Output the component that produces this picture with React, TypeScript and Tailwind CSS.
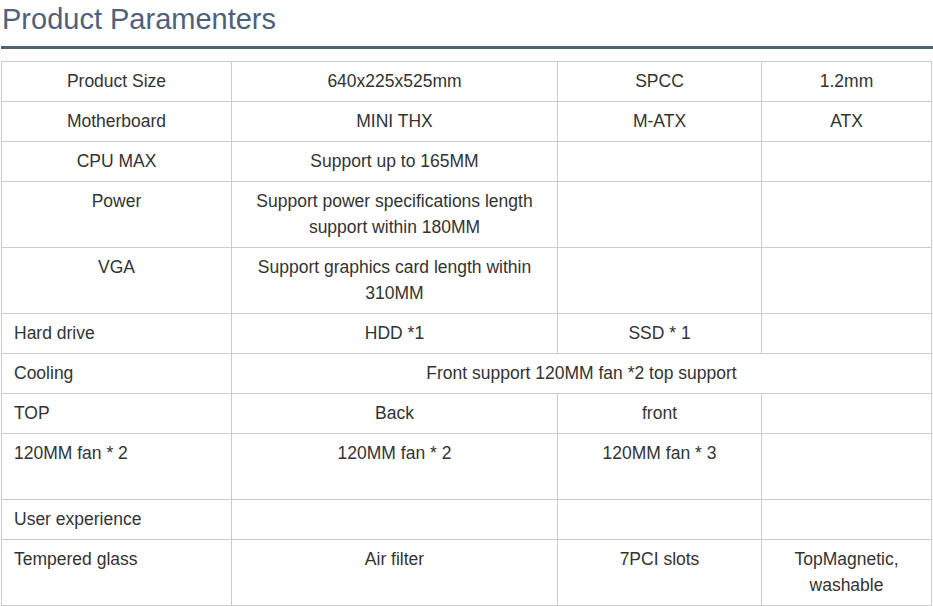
import React from "react";

const cell = "border border-[#cccccc] px-3 pt-[6px] pb-[7px] align-top leading-[26px]";

type Row = { cells: { t: React.ReactNode; span?: number; left?: boolean }[] };

const rows: Row[] = [
  { cells: [{ t: "Product Size" }, { t: "640x225x525mm" }, { t: "SPCC" }, { t: "1.2mm" }] },
  { cells: [{ t: "Motherboard" }, { t: "MINI THX" }, { t: "M-ATX" }, { t: "ATX" }] },
  { cells: [{ t: "CPU MAX" }, { t: "Support up to 165MM" }, { t: "" }, { t: "" }] },
  { cells: [{ t: "Power" }, { t: <>Support power specifications length<br />support within 180MM</> }, { t: "" }, { t: "" }] },
  { cells: [{ t: "VGA" }, { t: <>Support graphics card length within<br />310MM</> }, { t: "" }, { t: "" }] },
  { cells: [{ t: "Hard drive", left: true }, { t: "HDD *1" }, { t: "SSD * 1" }, { t: "" }] },
  { cells: [{ t: "Cooling", left: true }, { t: "Front support 120MM fan *2 top support", span: 3 }] },
  { cells: [{ t: "TOP", left: true }, { t: "Back" }, { t: "front" }, { t: "" }] },
  { cells: [{ t: <>120MM fan * 2<br />&nbsp;</>, left: true }, { t: "120MM fan * 2" }, { t: "120MM fan * 3" }, { t: "" }] },
  { cells: [{ t: "User experience", left: true }, { t: "" }, { t: "" }, { t: "" }] },
  { cells: [{ t: "Tempered glass", left: true }, { t: "Air filter" }, { t: "7PCI slots" }, { t: <>TopMagnetic,<br />washable</> }] },
];

export default function App() {
  return (
    <div className="w-[933px] h-[606px] bg-white overflow-hidden" style={{ fontFamily: '"Liberation Sans", Arial, sans-serif' }}>
      <div className="pl-[1px]">
        <h2 className="text-[29px] leading-[36px] text-[#4f6179] pt-[1px] pl-[1px] whitespace-nowrap">Product Paramenters</h2>
        <div className="mt-[9px] h-[3px] bg-[#4e6078]" />
      </div>
      <table className="mt-[12px] ml-[1px] w-[930px] border-collapse table-fixed text-[17.5px] text-[#333333]">
        <colgroup>
          <col className="w-[230px]" />
          <col className="w-[326px]" />
          <col className="w-[204px]" />
          <col className="w-[170px]" />
        </colgroup>
        <tbody>
          {rows.map((r, i) => (
            <tr key={i}>
              {r.cells.map((c, j) => (
                <td key={j} colSpan={c.span} className={`${cell} ${c.left ? "text-left" : "text-center"} whitespace-nowrap`}>
                  {c.t === "" ? <>&nbsp;</> : c.t}
                </td>
              ))}
            </tr>
          ))}
        </tbody>
      </table>
    </div>
  );
}
